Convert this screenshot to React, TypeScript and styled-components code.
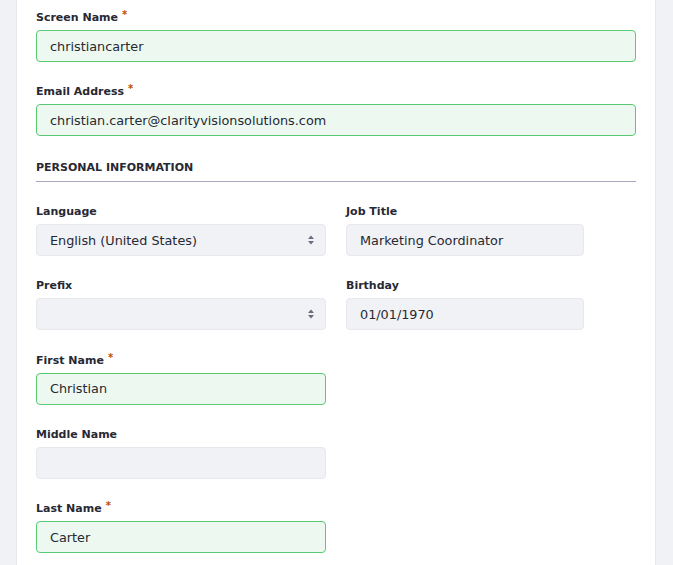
import React from "react";
import styled, { createGlobalStyle } from "styled-components";

const Global = createGlobalStyle`
  html, body { margin: 0; padding: 0; background: #f1f2f5; }
  body { font-family: "DejaVu Sans", sans-serif; color: #272833; }
`;

const Page = styled.div`
  height: 565px;
  overflow: hidden;
  padding-left: 16px;
`;

const Card = styled.div`
  width: 640px;
  box-sizing: border-box;
  min-height: 565px;
  background: #fff;
  border-left: 1px solid #e7e7ed;
  border-right: 1px solid #e7e7ed;
  padding: 8px 19px 0;
`;

const Group = styled.div`
  margin-bottom: 20.25px;
  display: flex;
  flex-direction: column;
`;

const Label = styled.label`
  font-size: 11px;
  font-weight: bold;
  line-height: 20px;
  height: 20px;
  margin-bottom: 2px;
  color: #272833;
  display: flex;
  align-items: flex-start;
`;

const Req = styled.span`
  color: #b95000;
  font-size: 10px;
  line-height: 10px;
  margin-left: 4px;
  margin-top: 2px;
`;

const Input = styled.div<{ $ok?: boolean; $width?: number }>`
  box-sizing: border-box;
  height: 32px;
  width: ${(p) => (p.$width ? `${p.$width}px` : "100%")};
  border-radius: 4px;
  border: 1px solid ${(p) => (p.$ok ? "#5aca75" : "#e7e7ed")};
  background: ${(p) => (p.$ok ? "#edf9f0" : "#f1f2f5")};
  padding: 0 13px;
  font-size: 12.8px;
  color: #272833;
  display: flex;
  align-items: center;
  justify-content: space-between;
`;

const Section = styled.div`
  font-size: 11px;
  font-weight: bold;
  text-transform: uppercase;
  color: #272833;
  padding: 2.5px 0 4.25px;
  line-height: 18px;
  border-bottom: 1px solid #a7a9bc;
  margin-bottom: 19.75px;
`;

const Grid = styled.div`
  display: grid;
  grid-template-columns: 290px 290px;
  column-gap: 20px;
`;

const Col = styled.div`
  display: flex;
  flex-direction: column;
`;

const Arrows = () => (
  <svg width="8" height="12" viewBox="0 0 8 12" style={{ marginRight: -3 }}>
    <path d="M4 1.5 L7 5 L1 5 Z" fill="#6b6c7e" />
    <path d="M4 10.5 L7 7 L1 7 Z" fill="#6b6c7e" />
  </svg>
);

type FieldProps = {
  label: string;
  value?: string;
  required?: boolean;
  ok?: boolean;
  select?: boolean;
  width?: number;
};

const Field = ({ label, value, required, ok, select, width }: FieldProps) => (
  <Group>
    <Label>
      {label}
      {required && <Req>*</Req>}
    </Label>
    <Input $ok={ok} $width={width}>
      <span>{value}</span>
      {select && <Arrows />}
    </Input>
  </Group>
);

export default function App() {
  return (
    <Page>
      <Global />
      <Card>
        <Field label="Screen Name" required ok value="christiancarter" />
        <Field
          label="Email Address"
          required
          ok
          value="christian.carter@clarityvisionsolutions.com"
        />
        <Section>Personal Information</Section>
        <Grid>
          <Col>
            <Field label="Language" select value="English (United States)" />
            <Field label="Prefix" select />
            <Field label="First Name" required ok value="Christian" />
            <Field label="Middle Name" />
            <Field label="Last Name" required ok value="Carter" />
          </Col>
          <Col>
            <Field label="Job Title" value="Marketing Coordinator" width={238} />
            <Field label="Birthday" value="01/01/1970" width={238} />
          </Col>
        </Grid>
      </Card>
    </Page>
  );
}
